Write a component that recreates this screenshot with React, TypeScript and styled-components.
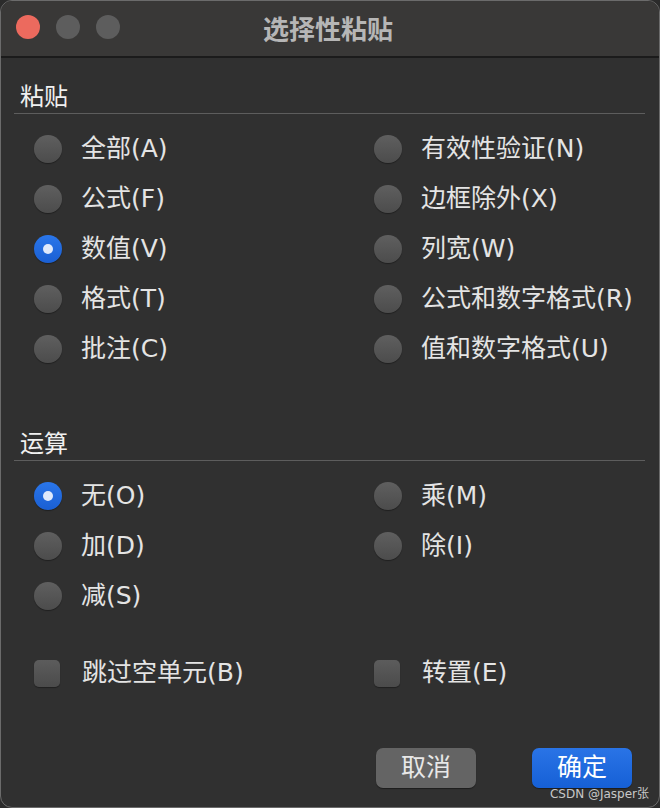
import React from 'react'
import styled, { createGlobalStyle } from 'styled-components';

const Global = createGlobalStyle`
  html, body { margin: 0; padding: 0; background: #2b2b2b; }
  body { font-family: "Noto Sans CJK SC", "Noto Sans", sans-serif; }
`;

type Opt = { label: string; checked?: boolean };

const pasteLeft: Opt[] = [
    {label: '全部(A)'}, {label: '公式(F)'}, {label: '数值(V)', checked: true}, {label: '格式(T)'}, {label: '批注(C)'},
];
const pasteRight: Opt[] = [
    {label: '有效性验证(N)'}, {label: '边框除外(X)'}, {label: '列宽(W)'}, {label: '公式和数字格式(R)'}, {label: '值和数字格式(U)'},
];
const opLeft: Opt[] = [{label: '无(O)', checked: true}, {label: '加(D)'}, {label: '减(S)'}];
const opRight: Opt[] = [{label: '乘(M)'}, {label: '除(I)'}];

const RadioColumn = ({items}: {items: Opt[]}) =>
    <Column>
        {items.map(o =>
            <Row key={o.label}>
                <Radio $on={!!o.checked}/>
                <Label>{o.label}</Label>
            </Row>)}
    </Column>;

const App = () =>
    <Window>
        <Global/>
        <TitleBar>
            <Lights>
                <Light $color="#ec6a5e"/>
                <Light $color="#5d5d5d"/>
                <Light $color="#5d5d5d"/>
            </Lights>
            <Title>选择性粘贴</Title>
        </TitleBar>
        <Body>
            <Heading>粘贴</Heading>
            <Grid>
                <RadioColumn items={pasteLeft}/>
                <RadioColumn items={pasteRight}/>
            </Grid>
            <Heading $top={52}>运算</Heading>
            <Grid>
                <RadioColumn items={opLeft}/>
                <RadioColumn items={opRight}/>
            </Grid>
            <Checks>
                <CheckRow><Check/><Label>跳过空单元(B)</Label></CheckRow>
                <CheckRow><Check/><Label>转置(E)</Label></CheckRow>
            </Checks>
            <Footer>
                <Button>取消</Button>
                <Button $primary>确定</Button>
            </Footer>
        </Body>
        <Watermark>CSDN @Jasper张</Watermark>
    </Window>;

const Window = styled.div`
  position: relative;
  width: 660px;
  height: 808px;
  box-sizing: border-box;
  border: 1px solid #6b6b6b;
  border-radius: 12px;
  background: #303030;
  overflow: hidden;
  display: flex;
  flex-direction: column;
`;
const TitleBar = styled.div`
  height: 55px;
  flex-shrink: 0;
  background: #393837;
  border-bottom: 2px solid #1b1b1b;
  display: flex;
  align-items: center;
  justify-content: center;
  position: relative;
`;
const Lights = styled.div`
  position: absolute;
  left: 15px;
  top: 14px;
  display: flex;
  gap: 16px;
`;
const Light = styled.div<{ $color: string }>`
  width: 24px;
  height: 24px;
  border-radius: 50%;
  background: ${p => p.$color};
`;
const Title = styled.div`
  color: #b6b6b6;
  font-size: 26px;
  font-weight: 700;
  margin-left: -4px;
  margin-top: -2px;
`;
const Body = styled.div`
  flex: 1;
  display: flex;
  flex-direction: column;
  padding: 0 14px 0 13px;
`;
const Heading = styled.div<{ $top?: number }>`
  margin-top: ${p => p.$top ?? 21}px;
  padding-left: 6px;
  padding-bottom: 2px;
  color: #f0f0f0;
  font-size: 24px;
  line-height: 32px;
  border-bottom: 1px solid #5d5d5d;
`;
const Grid = styled.div`
  display: grid;
  grid-template-columns: 340px 1fr;
  padding-top: 10px;
`;
const Column = styled.div`
  display: flex;
  flex-direction: column;
`;
const Row = styled.div`
  height: 50px;
  display: flex;
  align-items: center;
  padding-left: 20px;
`;
const Radio = styled.div<{ $on: boolean }>`
  width: 28px;
  height: 28px;
  border-radius: 50%;
  box-sizing: border-box;
  margin-right: 19px;
  flex-shrink: 0;
  position: relative;
  background: ${p => p.$on ? 'linear-gradient(#2a76ea, #1a5fd3)' : 'linear-gradient(#5f5f5f, #4c4c4c)'};
  box-shadow: 0 1px 1px rgba(0,0,0,0.35);
  &::after {
    content: '';
    display: ${p => p.$on ? 'block' : 'none'};
    position: absolute;
    left: 9px;
    top: 9px;
    width: 10px;
    height: 10px;
    border-radius: 50%;
    background: #dfe9fb;
  }
`;
const Label = styled.span`
  color: #e4e4e4;
  font-family: "DejaVu Sans", "Noto Sans CJK SC", sans-serif;
  font-size: 25px;
  line-height: 30px;
  white-space: nowrap;
`;
const Checks = styled.div`
  display: grid;
  grid-template-columns: 340px 1fr;
  margin-top: 37px;
`;
const CheckRow = styled.div`
  height: 30px;
  display: flex;
  align-items: center;
  padding-left: 20px;
`;
const Check = styled.div`
  width: 26px;
  height: 27px;
  border-radius: 5px;
  flex-shrink: 0;
  background: linear-gradient(#5c5c5c, #4b4b4b);
  box-shadow: 0 1px 1px rgba(0,0,0,0.35);
  margin-right: 22px;
`;
const Footer = styled.div`
  margin-top: 60px;
  display: flex;
  justify-content: flex-end;
  gap: 56px;
  padding-right: 13px;
`;
const Button = styled.div<{ $primary?: boolean }>`
  width: 100px;
  height: 40px;
  border-radius: 7px;
  display: flex;
  align-items: center;
  justify-content: center;
  font-size: 25px;
  padding-bottom: 6px;
  box-sizing: border-box;
  color: ${p => p.$primary ? '#ffffff' : '#e8e8e8'};
  background: ${p => p.$primary ? 'linear-gradient(#2a74e6, #1660d6)' : '#646464'};
  box-shadow: 0 1px 1px rgba(0,0,0,0.4);
`;
const Watermark = styled.div`
  position: absolute;
  right: 10px;
  bottom: 6px;
  font-family: "DejaVu Sans", "Noto Sans CJK SC", sans-serif;
  font-size: 12px;
  line-height: 14px;
  color: #c8c8c8;
`;

export default App
